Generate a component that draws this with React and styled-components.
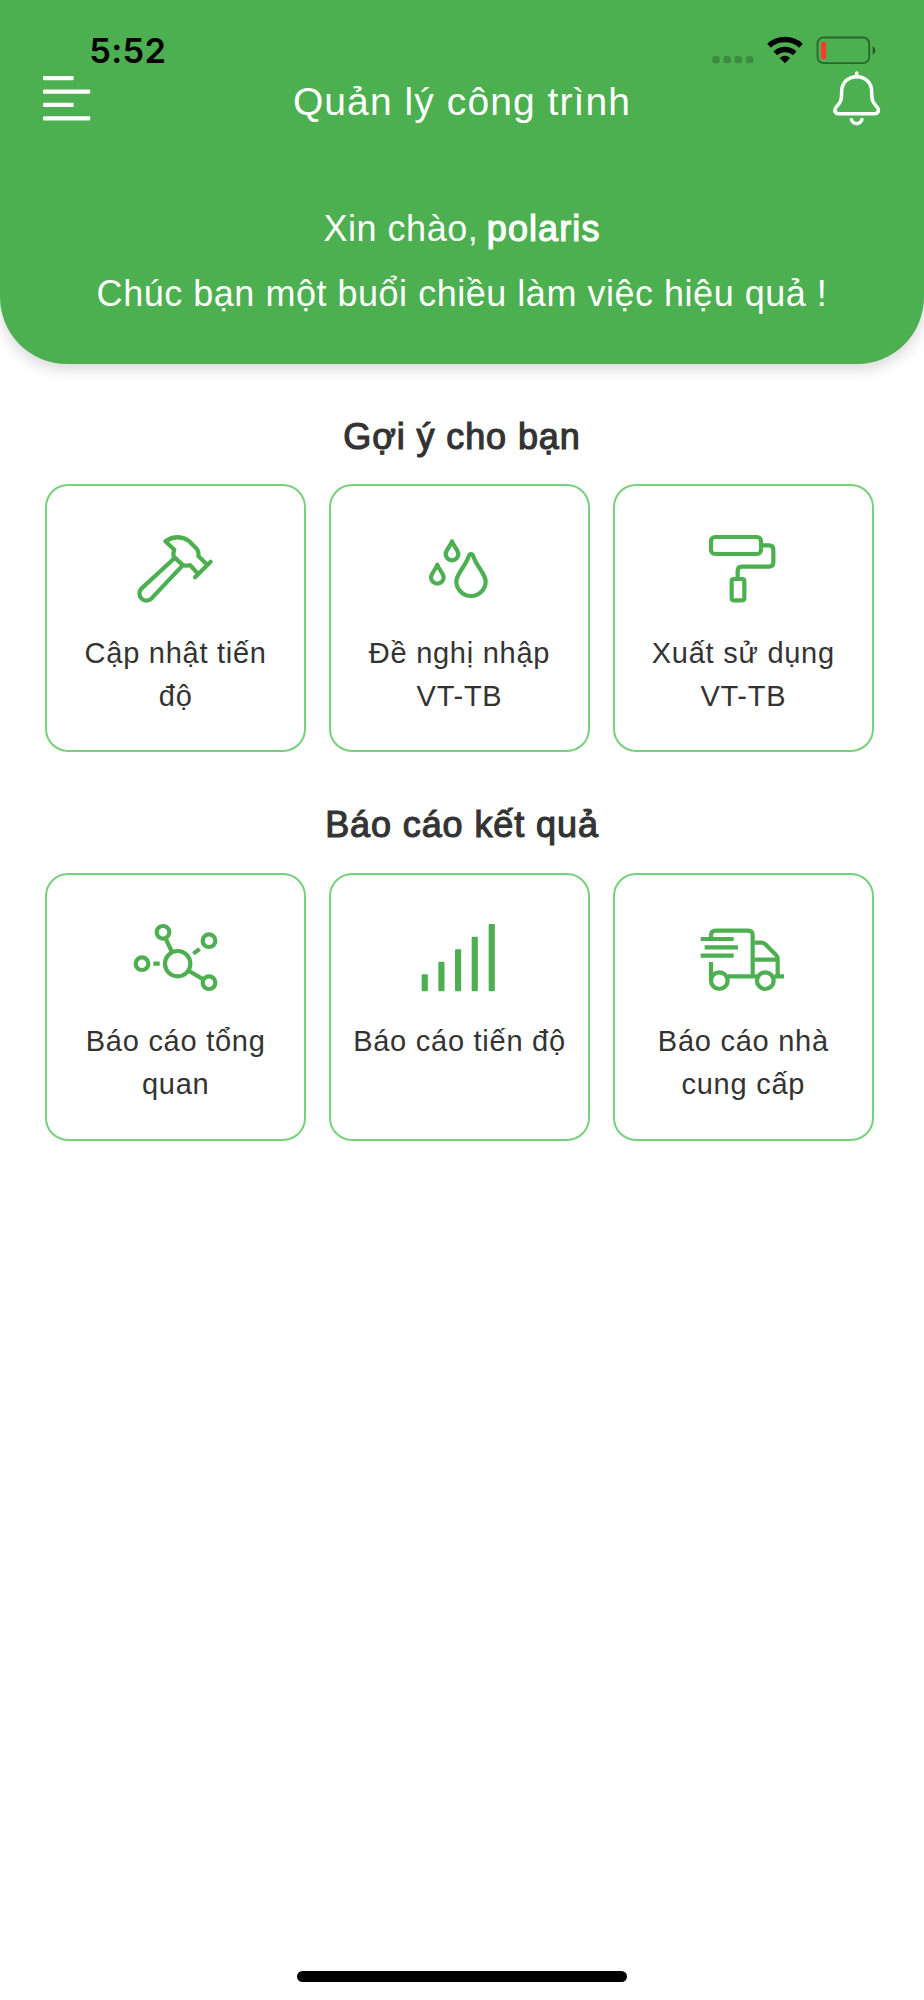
import React from 'react';
import styled, { createGlobalStyle } from 'styled-components';

const GREEN = '#4caf50';

const GlobalStyle = createGlobalStyle`
  * { box-sizing: border-box; }
  body {
    margin: 0;
    background: #fff;
    color: #333;
    font-family: "Liberation Sans", Arial, sans-serif;
  }
`;

const Screen = styled.div`
  width: 924px;
  height: 2000px;
  display: flex;
  flex-direction: column;
  overflow: hidden;
  background: #fff;
`;

const Header = styled.header`
  height: 363.5px;
  flex: none;
  background: ${GREEN};
  color: #fff;
  border-radius: 0 0 67px 67px;
  box-shadow: 0 5px 15px rgba(0, 0, 0, 0.16);
`;

const StatusBar = styled.div`
  height: 68px;
  display: flex;
  justify-content: space-between;
  padding: 30px 46.7px 0 89.3px;
`;

const Clock = styled.span`
  color: #000;
  font: 600 34.5px/42px Inter, sans-serif;
  letter-spacing: 0.3px;
`;

const StatusIcons = styled.svg`
  width: 166px;
  height: 30px;
  margin-top: 5px;
`;

const TopBar = styled.div`
  height: 67px;
  display: flex;
  justify-content: space-between;
  align-items: flex-start;
  padding: 0 43px;
`;

const BarButton = styled.button`
  width: 48px;
  height: 60px;
  padding: 0;
  border: 0;
  background: none;
  svg { display: block; }
`;

const Title = styled.h1`
  margin: 0;
  font-size: 39px;
  font-weight: 400;
  line-height: 67px;
  letter-spacing: 1.08px;
`;

const Greeting = styled.div`
  margin-top: 61px;
  text-align: center;
  font-size: 36px;
  line-height: 65px;
  letter-spacing: 0.52px;
  p { margin: 0; }
`;

const Medium = styled.span`
  -webkit-text-stroke: 1.15px currentColor;
  letter-spacing: 0.9px;
`;

const UserName = styled(Medium)`
  margin-left: -2px;
  letter-spacing: 1.1px;
`;

const Main = styled.main`
  flex: 1;
  display: flex;
  flex-direction: column;
  gap: 51px;
  padding: 51px 50px 0 45px;
`;

const Section = styled.section`
  display: flex;
  flex-direction: column;
  gap: 25px;
`;

const SectionTitle = styled.h2`
  margin: 0;
  text-align: center;
  font-size: 36px;
  font-weight: 400;
  line-height: 44.5px;
  padding-left: 5px;
`;

const Cards = styled.div`
  display: grid;
  grid-template-columns: repeat(3, 1fr);
  gap: 22.5px;
`;

const Card = styled.button`
  height: 268px;
  display: flex;
  flex-direction: column;
  align-items: center;
  gap: 23.5px;
  padding: 44px 17px 0;
  border: 2px solid #77d17b;
  border-radius: 23px;
  background: #fff;
  color: #333;
  font-family: inherit;
`;

const CardLabel = styled.span`
  font-size: 29px;
  line-height: 43px;
  letter-spacing: 0.74px;
  text-align: center;
`;

const Icon = styled.svg`
  width: 88px;
  height: 78px;
  flex: none;
  fill: none;
  stroke: ${GREEN};
  stroke-width: 12.6;
  stroke-linejoin: round;
`;

const HomeArea = styled.footer`
  flex: none;
  display: flex;
  justify-content: center;
  padding-bottom: 18px;
`;

const HomeIndicator = styled.div`
  width: 330px;
  height: 11px;
  border-radius: 6px;
  background: #000;
`;

const HammerIcon = () => (
  <Icon viewBox="305 180 264 234">
    <path d="M433 264 L334 355 A21 21 0 0 0 363 386 L457 286" />
    <path d="M502 310 L479 285 Q465 289 456 284 L430 260 Q427 250 432 239 L405 214 Q441 190 476 213 L499 236 Q506 245 504 258 L529 283" />
    <path d="M494 322 L541 275" strokeLinecap="round" />
  </Icon>
);

const DropsIcon = () => (
  <Icon viewBox="286 390 264 234">
    <path d="M397 424 C391 441 378 450 378 462 A19 19 0 0 0 416 462 C416 450 403 441 397 424Z" />
    <path d="M353 494 C347 511 334 520 334 532 A19 19 0 0 0 372 532 C372 520 359 511 353 494Z" />
    <path d="M454 462 Q449 462 447 469 C437 500 410 522 410 544 A44 44 0 0 0 498 544 C498 522 471 500 461 469 Q459 462 454 462Z" />
  </Icon>
);

const RollerIcon = () => (
  <Icon viewBox="298 180 264 234">
    <rect x="334" y="201" width="150" height="51" rx="12" />
    <path d="M490 226 H508 Q521 226 521 239 V277 Q521 290 508 290 H427 Q414 290 414 303 V322" />
    <rect x="396" y="327" width="38" height="64" rx="6" />
  </Icon>
);

const NetworkIcon = () => (
  <Icon viewBox="305 175 264 234">
    <circle cx="442" cy="309" r="38" />
    <circle cx="398" cy="215" r="19" />
    <circle cx="536" cy="240" r="19" />
    <circle cx="335" cy="309" r="19" />
    <circle cx="536" cy="366" r="19" />
    <path d="M406 234 L425 274 M476 331 L519 356 M489 279 L508 265 M369 309 H388" />
  </Icon>
);

const BARS = [[306, 551], [356, 513], [406, 476], [456, 438], [507, 400]];

const BarsIcon = () => (
  <Icon viewBox="286 385 264 234">
    {BARS.map(([x, y]) => (
      <rect key={x} x={x} y={y} width="18.5" height={602 - y} rx="3" fill={GREEN} stroke="none" />
    ))}
  </Icon>
);

const TruckIcon = () => (
  <Icon viewBox="298 175 264 234">
    <path d="M334 234 V224 Q334 210 348 210 H445 Q459 210 459 224 V347" />
    <path d="M303 235 H402 M315 260 H415 M303 285 H402" />
    <path d="M334 304 V360 M385 347 H472 M524 347 H553" />
    <circle cx="359" cy="360" r="25" />
    <circle cx="497" cy="360" r="25" />
    <path d="M465 246 H486 Q492 246 497 251 L529 283 Q534 288 534 294 V347 M465 297 H534" />
  </Icon>
);

const MenuIcon = () => (
  <svg width="48" height="60" viewBox="0 0 48 60" fill="#fff">
    <rect y="8" width="30.7" height="4.3" rx="1" />
    <rect y="21.4" width="47.2" height="4.3" rx="1" />
    <rect y="34.8" width="30.7" height="4.3" rx="1" />
    <rect y="48.2" width="47.2" height="4.3" rx="1" />
  </svg>
);

const BellIcon = () => (
  <svg width="48" height="60" viewBox="579 204 144 180" fill="none" stroke="#fff" strokeWidth="10.6">
    <path d="M650 230 C622 230 605 250 605 275 C605 300 602 307 592 317 C583 326 583 331 586 336 Q589 341 596 341 H704 Q711 341 714 336 C717 331 716 326 708 317 C698 307 695 300 695 275 C695 250 678 230 650 230Z" />
    <path d="M650 219 V230" strokeLinecap="round" />
    <path d="M634 355 A16 16 0 0 0 666 355" />
  </svg>
);

const StatusGlyphs = () => (
  <StatusIcons viewBox="214 105 498 90" fill="none">
    {[218, 251.5, 285, 318.5].map((x) => (
      <rect key={x} x={x} y="168" width="22" height="22" rx="6" fill="#000" fillOpacity="0.2" />
    ))}
    <g stroke="#000" strokeWidth="16">
      <path d="M388 137 A71.5 71.5 0 0 1 484 137" />
      <path d="M407 160 A42 42 0 0 1 465 160" />
    </g>
    <path d="M420 174 Q436 160 451 174 L436 190Z" fill="#000" />
    <rect x="533.5" y="112.5" width="155" height="77" rx="18" stroke="#000" strokeOpacity="0.42" strokeWidth="5.4" />
    <rect x="544" y="125" width="15.5" height="53" rx="5" fill="#ff3b30" />
    <path d="M699 138 Q707 142 707 151 Q707 160 699 164Z" fill="#000" fillOpacity="0.5" />
  </StatusIcons>
);

const SECTIONS = [
  {
    title: 'Gợi ý cho bạn',
    items: [
      { label: 'Cập nhật tiến độ', Glyph: HammerIcon },
      { label: 'Đề nghị nhập VT-TB', Glyph: DropsIcon },
      { label: 'Xuất sử dụng VT-TB', Glyph: RollerIcon },
    ],
  },
  {
    title: 'Báo cáo kết quả',
    items: [
      { label: 'Báo cáo tổng quan', Glyph: NetworkIcon },
      { label: 'Báo cáo tiến độ', Glyph: BarsIcon },
      { label: 'Báo cáo nhà cung cấp', Glyph: TruckIcon },
    ],
  },
];

export default function App() {
  return (
    <Screen>
      <GlobalStyle />
      <Header>
        <StatusBar>
          <Clock>5:52</Clock>
          <StatusGlyphs />
        </StatusBar>
        <TopBar>
          <BarButton aria-label="Menu"><MenuIcon /></BarButton>
          <Title>Quản lý công trình</Title>
          <BarButton aria-label="Thông báo"><BellIcon /></BarButton>
        </TopBar>
        <Greeting>
          <p>Xin chào, <UserName>polaris</UserName></p>
          <p>Chúc bạn một buổi chiều làm việc hiệu quả !</p>
        </Greeting>
      </Header>
      <Main>
        {SECTIONS.map(({ title, items }) => (
          <Section key={title}>
            <SectionTitle><Medium>{title}</Medium></SectionTitle>
            <Cards>
              {items.map(({ label, Glyph }) => (
                <Card key={label}>
                  <Glyph />
                  <CardLabel>{label}</CardLabel>
                </Card>
              ))}
            </Cards>
          </Section>
        ))}
      </Main>
      <HomeArea><HomeIndicator /></HomeArea>
    </Screen>
  );
}
